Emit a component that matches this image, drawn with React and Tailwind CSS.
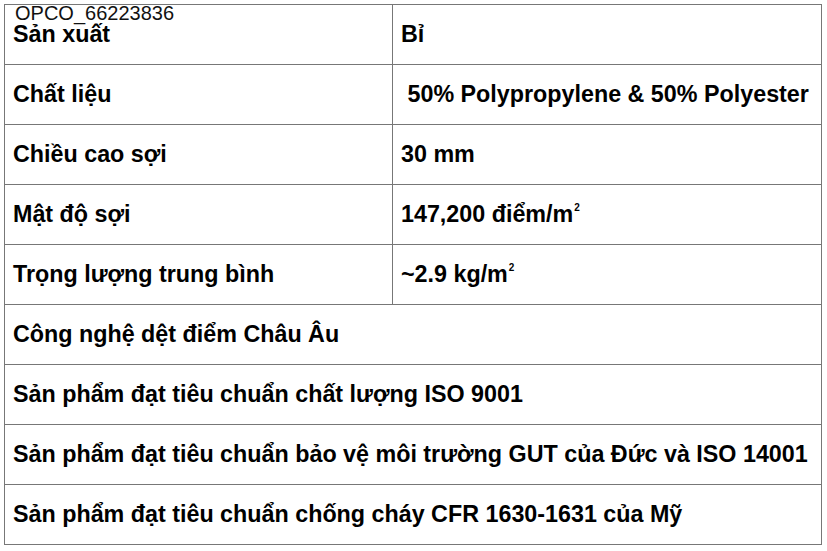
import React from "react";

const Sq = () => <span className="text-[10px] font-bold relative -top-[11px] ml-[1px]">2</span>;

const pairs = [
  ["Sản xuất", "Bỉ"],
  ["Chất liệu", "\u00a050% Polypropylene & 50% Polyester"],
  ["Chiều cao sợi", "30 mm"],
  ["Mật độ sợi", <>147,200 điểm/m<Sq /></>],
  ["Trọng lượng trung bình", <>~2.9 kg/m<Sq /></>],
];

const notes = [
  "Công nghệ dệt điểm Châu Âu",
  "Sản phẩm đạt tiêu chuẩn chất lượng ISO 9001",
  "Sản phẩm đạt tiêu chuẩn bảo vệ môi trường GUT của Đức và ISO 14001",
  "Sản phẩm đạt tiêu chuẩn chống cháy CFR 1630-1631 của Mỹ",
];

const App = () => {
  return (
    <div className="relative w-[827px] h-[551px] bg-white pt-1 pl-1 font-['Liberation_Sans',Arial,sans-serif] text-black">
      <div className="absolute left-[15px] top-[0px] text-[20px] leading-[26px] text-[#111]">OPCO_66223836</div>
      <table className="w-[818px] border-collapse text-[23.3px] font-bold">
        <tbody>
          {pairs.map(([k, v], i) => (
            <tr key={i} className="h-[60px]">
              <td className="w-[388px] border border-[#777] pl-2 align-middle">{k}</td>
              <td className="border border-[#777] pl-2 align-middle">{v}</td>
            </tr>
          ))}
          {notes.map((n, i) => (
            <tr key={i} className="h-[60px]">
              <td colSpan={2} className="border border-[#777] pl-2 align-middle">{n}</td>
            </tr>
          ))}
        </tbody>
      </table>
    </div>
  );
};

export default App;
